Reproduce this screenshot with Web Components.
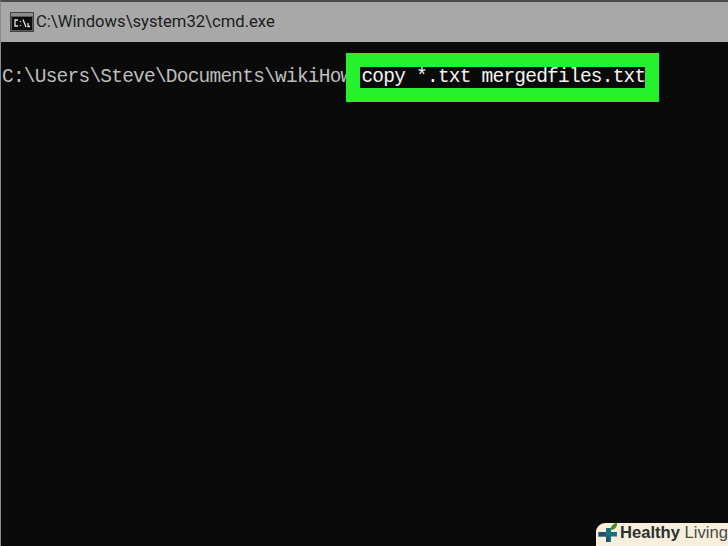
<!DOCTYPE html>
<html><head><meta charset="utf-8"><style>
html,body{margin:0;padding:0;background:#0a0a0a}
body{width:728px;height:546px;overflow:hidden}
</style></head><body>
<cmd-window title-text="C:\Windows\system32\cmd.exe">
<cmd-line prompt="C:\Users\Steve\Documents\wikiHow&gt;" command="copy *.txt mergedfiles.txt"></cmd-line>
</cmd-window>
<brand-badge></brand-badge>
<script>
class CmdWindow extends HTMLElement{constructor(){super();const s=this.attachShadow({mode:'open'});
s.innerHTML=`<style>
:host{display:flex;flex-direction:column;width:728px;height:546px;box-sizing:border-box;background:#0a0a0a;border-top:2px solid #4a4a4a;border-left:1px solid #8a8a8a}
.bar{height:40px;background:#a8a8a8;display:flex;align-items:center;gap:3px;padding:0 0 0 9px;flex:none;font:16.65px/1 Roboto,"Liberation Sans",sans-serif;color:#1c1c1c}
svg{flex:none;display:block}
span{position:relative;left:-1px}
.body{flex:1;padding:25px 0 0 1px;min-height:0}
</style><div class="bar"><svg width="24" height="20" viewBox="0 0 24 20"><rect x=".5" y=".5" width="23" height="19" fill="#5a5a5a" stroke="#444"/><rect x="1" y="1" width="22" height="3" fill="#8d8d8d"/><rect x="2" y="5" width="20" height="13" fill="#0c0c0c"/><path d="M8 8H5v6h3M10.500 9v1M10.500 13v1M13 7.500l3 7.500M18 11v3.500h2" fill="none" stroke="#e4e4e4" stroke-width="1.300"/></svg><span></span></div><div class="body"><slot></slot></div>`;
s.querySelector('span').textContent=this.getAttribute('title-text');}}
customElements.define('cmd-window',CmdWindow);
class CmdLine extends HTMLElement{constructor(){super();const s=this.attachShadow({mode:'open'});
s.innerHTML=`<style>
:host{display:block;font:19.5px/21px "Liberation Mono","DejaVu Sans Mono",monospace;letter-spacing:-.78px;white-space:pre;color:#bdbdbd}
.c{display:inline-block;margin-left:-2.6px;padding:0 0 0 1.6px;background:#0a0a0a;color:#f4f4f4;box-shadow:0 0 0 14px #25f22e}
</style><span class="p"></span><span class="c"></span>`;
s.querySelector('.p').textContent=this.getAttribute('prompt');s.querySelector('.c').textContent=this.getAttribute('command');}}
customElements.define('cmd-line',CmdLine);
class BrandBadge extends HTMLElement{constructor(){super();const s=this.attachShadow({mode:'open'});
s.innerHTML=`<style>
:host{position:absolute;right:0;bottom:0;width:132px;height:23px;background:#f7efdc;border-radius:9px 0 0 0;display:flex;align-items:center;gap:2px;padding:0 0 3px 2px;box-sizing:border-box;font:16.6px/1 "Liberation Sans",Arial,sans-serif;color:#333;white-space:nowrap}
b{color:#2b3230}span{color:#4a4a46}
svg{flex:none;display:block;overflow:visible}
</style><svg width="20" height="18" viewBox="0 0 20 18"><path d="M8 8V4h5v4h6v4.500h-6V18H8v-5.500H.5V8z" fill="#16727f"/><path d="M8 8v4.500H.5V8zM8 12.500h3V18H8z" fill="#23506a"/><path d="M13 6c-1-3.500 2-6 6-7.500 .5 4-1.500 7-6 7.500z" fill="#4f8a2e"/></svg><div><b>Healthy</b> <span>Living</span></div>`;}}
customElements.define('brand-badge',BrandBadge);
</script></body></html>
